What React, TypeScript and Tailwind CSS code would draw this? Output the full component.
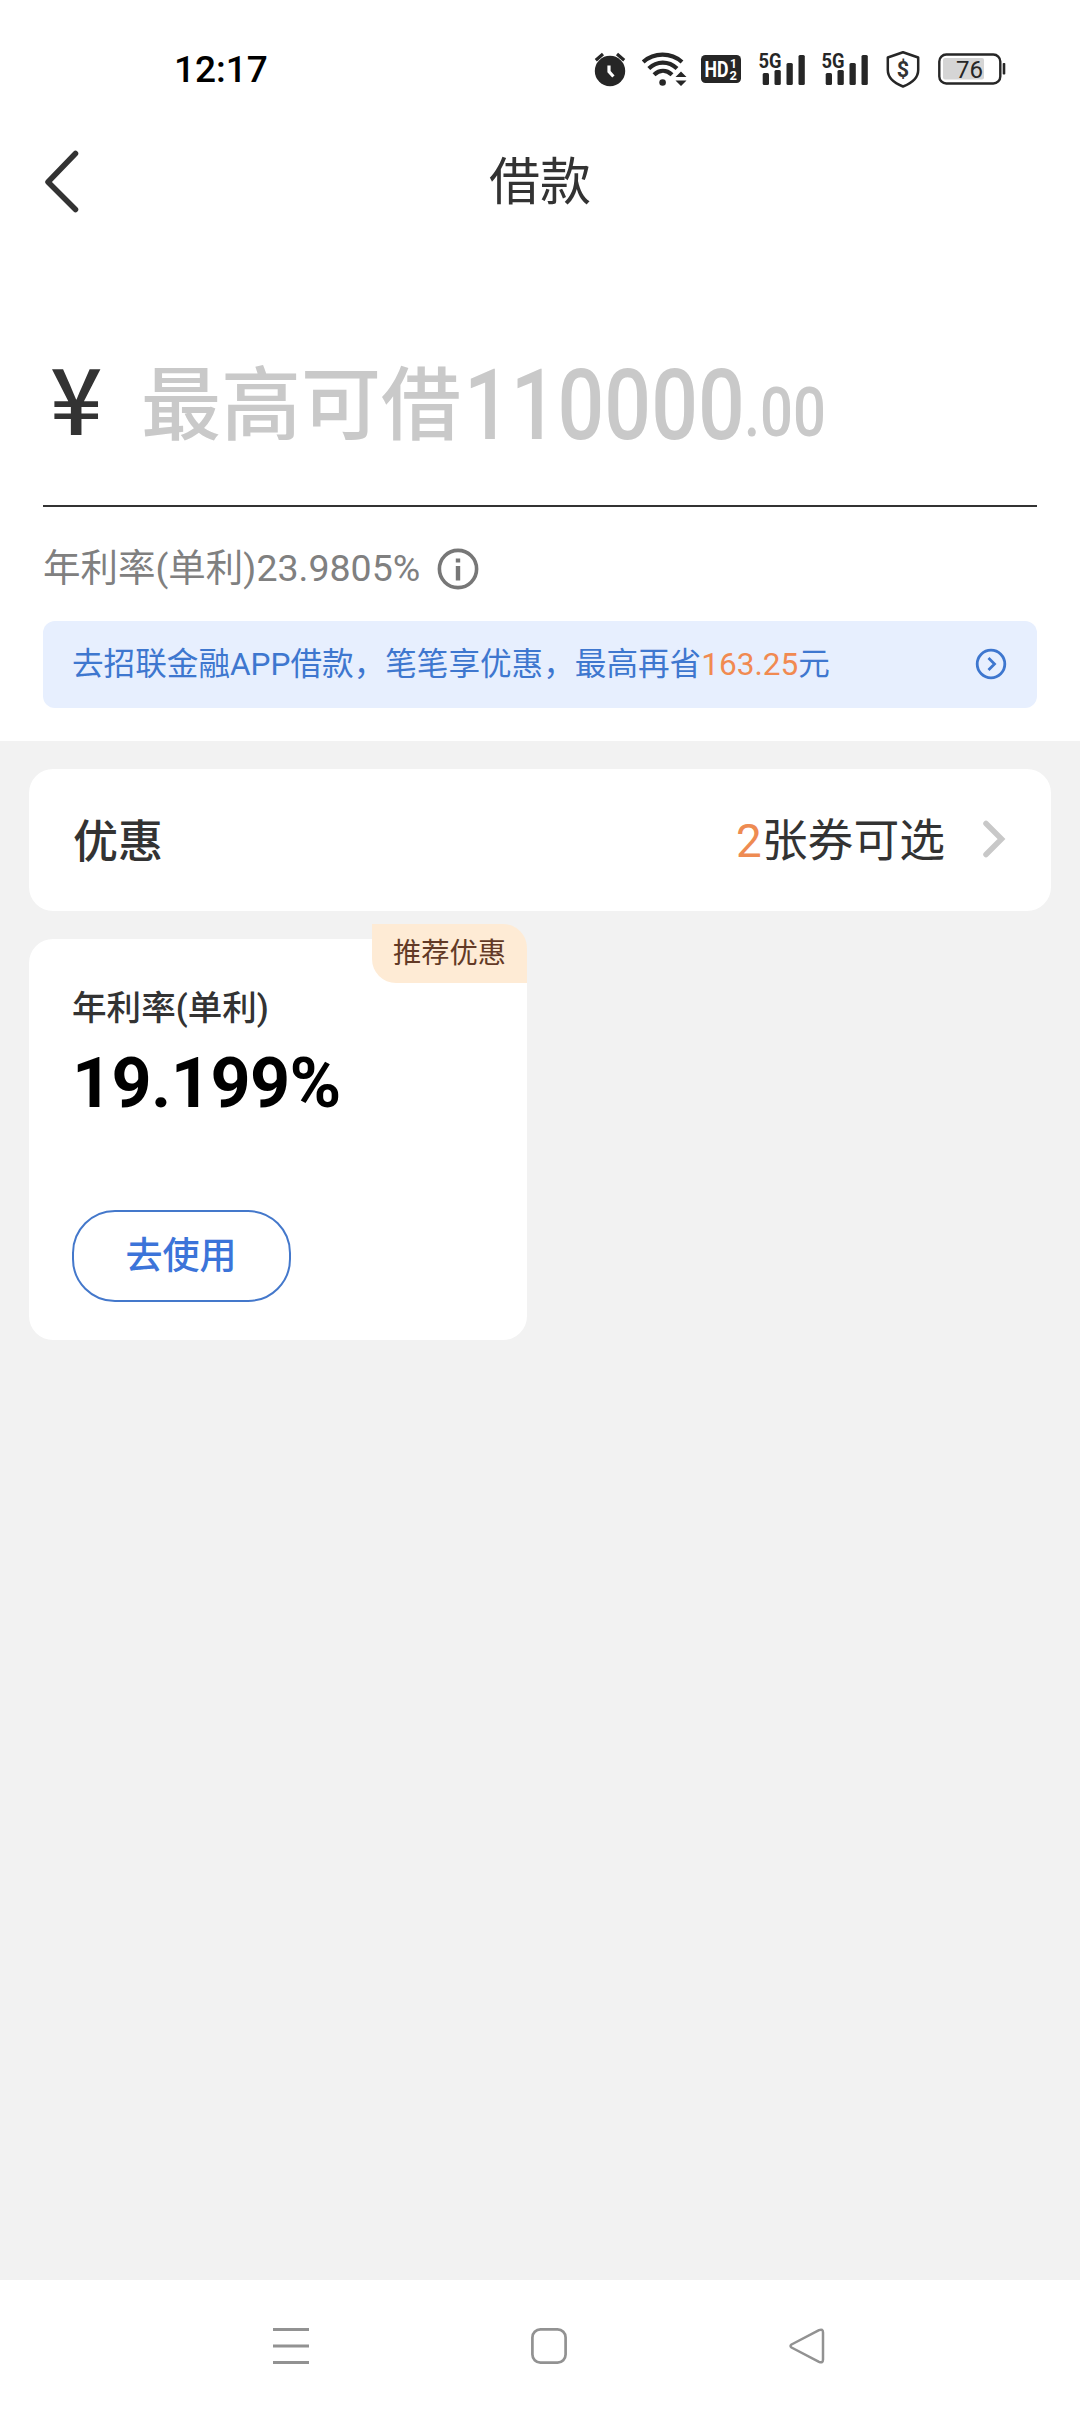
import type { ReactNode } from "react";

function AlarmIcon() {
  return (
    <svg className="ml-[326px] h-9 w-8 shrink-0" viewBox="0 0 32 36" fill="none">
      <circle cx="16" cy="20" r="15.2" fill="#262626" />
      <path d="M1.8 9.2 9 3M30.2 9.2 23 3" stroke="#262626" strokeWidth="3.2" />
      <path d="M15 14.5v6.2l4.4 4.8" stroke="#fff" strokeWidth="3.2" />
    </svg>
  );
}

function WifiIcon() {
  return (
    <svg className="ml-4 h-9 w-[46px] shrink-0" viewBox="0 0 46 36" fill="none" stroke="#262626">
      <path d="M1.2 11C12 1.200 29 1.200 40 11" strokeWidth="4.200" />
      <path d="M6.8 17.500C15 9.600 26.500 9.600 35 17.500" strokeWidth="4.200" />
      <path d="M12 23.800C17.500 18.600 24.500 18.600 30 23.800" strokeWidth="4.200" />
      <circle cx="20.600" cy="31.500" r="3.300" fill="#262626" stroke="none" />
      <path d="M33.500 26 39 20.500l5.500 5.500zM33.500 29.500 39 35l5.500-5.500z" fill="#262626" stroke="none" />
    </svg>
  );
}

function HdIcon() {
  return (
    <svg className="ml-[13px] h-7 w-10 shrink-0 overflow-visible" viewBox="0 0 40 28">
      <rect width="40" height="28" rx="4.500" fill="#262626" />
      <g fill="#fff" fontFamily="Roboto, sans-serif" fontWeight="700">
        <text x="3.500" y="22" fontSize="22.500" textLength="24" lengthAdjust="spacingAndGlyphs">HD</text>
        <text x="29" y="13" fontSize="12">1</text>
        <text x="28.500" y="25.200" fontSize="13">2</text>
      </g>
    </svg>
  );
}

function SignalIcon({ className }: { className: string }) {
  return (
    <svg className={className} viewBox="0 0 47 36" fill="#262626">
      <rect x="3.700" y="22" width="6.300" height="12" rx="1.500" />
      <rect x="15.500" y="19" width="6.300" height="15" rx="1.500" />
      <rect x="27.500" y="12" width="6.300" height="22" rx="1.500" />
      <rect x="39.500" y="4" width="6.300" height="30" rx="1.500" />
      <text x="-0.500" y="17.300" fontFamily="Roboto, sans-serif" fontWeight="700" fontSize="21" textLength="23" lengthAdjust="spacingAndGlyphs">5G</text>
    </svg>
  );
}

function ShieldIcon() {
  return (
    <svg className="ml-[17px] h-[38px] w-[34px] shrink-0" viewBox="0 0 34 38" fill="none">
      <path d="M17 2.200 32.200 7.500V20c0 8-6 13-15.200 16.500C8 33 1.800 28 1.800 20V7.500z" stroke="#262626" strokeWidth="2.500" strokeLinejoin="round" />
      <text x="17" y="27" textAnchor="middle" fill="#333" fontFamily="Roboto, sans-serif" fontWeight="700" fontSize="21.500">$</text>
    </svg>
  );
}

function BatteryIcon() {
  return (
    <svg className="ml-[18px] h-8 w-[68px] shrink-0" viewBox="0 0 68 32" fill="none">
      <rect x="1.300" y="1.500" width="61" height="29" rx="7" stroke="#262626" strokeWidth="2.400" />
      <rect x="5" y="5" width="41" height="21.500" rx="2" fill="#d5d5d5" />
      <rect x="64.700" y="10" width="2.600" height="11.500" rx="0.800" fill="#262626" />
      <text x="18" y="24.500" fontFamily="Roboto, sans-serif" fontSize="24" textLength="27" lengthAdjust="spacingAndGlyphs" fill="#262626">76</text>
    </svg>
  );
}

function StatusBar() {
  return (
    <div className="flex h-[138px] items-center pl-[174px]">
      <span className="w-[94px] pt-0.5 font-['Roboto'] text-[37px] font-medium text-black">12:17</span>
      <AlarmIcon />
      <WifiIcon />
      <HdIcon />
      <SignalIcon className="ml-[18px] h-9 w-[47px] shrink-0 overflow-visible" />
      <SignalIcon className="ml-4 h-9 w-[47px] shrink-0 overflow-visible" />
      <ShieldIcon />
      <BatteryIcon />
    </div>
  );
}

function TitleBar() {
  return (
    <div className="grid h-[86px] grid-cols-[200px_1fr_200px] items-center">
      <svg className="ml-[43px] h-16 w-9" viewBox="0 0 36 64" fill="none" stroke="#333" strokeWidth="5.500" strokeLinecap="round" strokeLinejoin="round">
        <path d="M32.500 4.500 5 33 32.500 60.500" />
      </svg>
      <h1 className="pt-[3px] text-center text-[51px] leading-none">借款</h1>
    </div>
  );
}

function AmountField() {
  return (
    <div className="mx-[43px] flex h-[283px] items-end border-b-2 border-[#333] pb-[51px]">
      <span className="mb-[15px] w-[98px] pl-[7px] font-['Noto_Sans_CJK_SC'] text-[92px] leading-[88px] font-medium">¥</span>
      <div className="flex items-baseline whitespace-nowrap text-[#c9c9c9]">
        <span className="text-[80px] leading-[88px] font-medium">最高可借</span>
        <span className="ml-[3px] inline-block w-[280px] origin-left translate-y-1.5 scale-x-[0.84] font-['Roboto'] text-[98px] leading-[88px] font-medium">110000</span>
        <span className="inline-block origin-left translate-y-[3px] scale-x-[0.84] font-['Roboto'] text-[69px] leading-[88px] font-medium">.00</span>
      </div>
    </div>
  );
}

function RateLine() {
  return (
    <div className="mx-[43px] flex h-[114px] items-center pt-2.5">
      <span className="text-[37.500px] leading-none text-[#808080]">年利率(单利)23.9805%</span>
      <svg className="ml-[17px] h-[42px] w-[42px]" viewBox="0 0 42 42" fill="none" stroke="#777" strokeWidth="3.600">
        <circle cx="21" cy="21" r="18.600" />
        <path d="M21 18v14.500M21 10.500v4" strokeWidth="4.400" />
      </svg>
    </div>
  );
}

function Banner() {
  return (
    <div className="mx-[43px] flex h-[87px] items-center justify-between rounded-xl bg-[#e7effe] pr-[30px] pb-0.5 pl-[29px] text-[#3e77cf]">
      <span className="pt-0.5 text-[31.600px] leading-none">
        去招联金融APP借款，笔笔享优惠，最高再省<span className="text-[#f18a51]">163.25</span>元
      </span>
      <svg className="h-8 w-8" viewBox="0 0 32 32" fill="none" stroke="currentColor" strokeWidth="2.800">
        <circle cx="16" cy="16" r="13.800" />
        <path d="m13.500 10 6 6-6 6" />
      </svg>
    </div>
  );
}

function Card({ children, className }: { children: ReactNode; className: string }) {
  return <section className={className}>{children}</section>;
}

function CouponSummary() {
  return (
    <Card className="flex h-[142px] items-center rounded-3xl bg-white pr-[45px] pl-11">
      <h2 className="pt-[5px] text-[45px] leading-none font-medium">优惠</h2>
      <span className="ml-auto pt-1 text-[45.800px] leading-none">
        <span className="text-[#ee8b52]">2</span>张券可选
      </span>
      <svg className="mb-0.5 ml-[37px] h-[38px] w-6" viewBox="0 0 24 38" fill="none" stroke="#c8c8c8" strokeWidth="5.500">
        <path d="M4 3.500 19.500 19 4 34.500" strokeLinecap="round" />
      </svg>
    </Card>
  );
}

function CouponCard() {
  return (
    <Card className="relative mt-7 flex h-[401px] w-[498px] flex-col items-start rounded-3xl bg-white pt-[50px] pl-[43px]">
      <span className="absolute -top-[15px] right-0 flex h-[59px] w-[155px] items-center justify-center rounded-tr-3xl rounded-bl-3xl bg-[#feebd5] pt-px text-[28.300px] text-[#633a26]">推荐优惠</span>
      <h3 className="text-[34.600px] leading-[38px] font-medium">年利率(单利)</h3>
      <strong className="mt-3.5 font-['Roboto'] text-[70px] leading-[84px] font-bold tracking-[-0.6px] text-black">19.199%</strong>
      <button className="mt-[85px] h-[92px] w-[219px] rounded-[43px] border-2 border-[#4478cb] pr-px text-[37px] leading-none font-medium text-[#3c74d9]">去使用</button>
    </Card>
  );
}

function NavBar() {
  return (
    <nav className="flex h-[132px] items-center justify-center gap-[222px] bg-white pl-[18px] text-[#929292]">
      <svg className="h-9 w-9" viewBox="0 0 36 36" stroke="currentColor" strokeWidth="3">
        <path d="M0 1.500h36M0 18h36M0 34.500h36" />
      </svg>
      <svg className="h-9 w-9" viewBox="0 0 36 36" fill="none" stroke="currentColor" strokeWidth="2.700">
        <rect x="1.400" y="1.400" width="33.200" height="33.200" rx="8" />
      </svg>
      <svg className="h-9 w-9" viewBox="0 0 36 36" fill="none" stroke="currentColor" strokeWidth="2.500" strokeLinejoin="round">
        <path d="M2.500 16.500 30 2.200Q34 .5 34 4.500v27q0 4-4 2.300L2.500 19.500Q.5 18 2.500 16.500Z" />
      </svg>
    </nav>
  );
}

export default function App() {
  return (
    <div className="flex h-[2412px] w-[1080px] flex-col overflow-hidden bg-[#f2f2f2] font-['Roboto','Noto_Sans_CJK_SC',sans-serif] text-[#333]">
      <header className="h-[741px] bg-white">
        <StatusBar />
        <TitleBar />
        <AmountField />
        <RateLine />
        <Banner />
      </header>
      <main className="flex-1 px-[29px] pt-7">
        <CouponSummary />
        <CouponCard />
      </main>
      <NavBar />
    </div>
  );
}
